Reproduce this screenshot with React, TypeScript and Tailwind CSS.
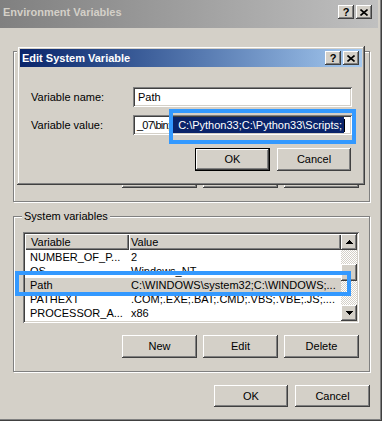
type VarRow = { name: string; value: string; selected?: boolean };

const raised =
  "shadow-[inset_-1px_-1px_#404040,inset_1px_1px_#ffffff,inset_-2px_-2px_#808080,inset_2px_2px_#d4d0c8]";
const sunken =
  "shadow-[inset_1px_1px_#808080,inset_-1px_-1px_#ffffff,inset_2px_2px_#404040,inset_-2px_-2px_#d4d0c8]";
const headerCell =
  "bg-[#d4d0c8] shadow-[inset_1px_1px_#ffffff,inset_-1px_-1px_#404040,inset_-2px_-2px_#808080]";
const checker =
  "bg-[image:repeating-conic-gradient(#d4d0c8_0%_25%,#ffffff_0%_50%)] bg-[length:2px_2px]";

const systemVars: VarRow[] = [
  { name: "NUMBER_OF_P...", value: "2" },
  { name: "OS", value: "Windows_NT" },
  { name: "Path", value: "C:\\WINDOWS\\system32;C:\\WINDOWS;...", selected: true },
  { name: "PATHEXT", value: ".COM;.EXE;.BAT;.CMD;.VBS;.VBE;.JS;...." },
  { name: "PROCESSOR_A...", value: "x86" },
];

function Button({ label, w, h = "h-[23px]", isDefault = false }: { label: string; w: string; h?: string; isDefault?: boolean }) {
  return (
    <button
      type="button"
      className={`flex ${h} ${w} items-center justify-center bg-[#d4d0c8] text-[11px] text-black ${isDefault ? "border border-black" : ""} ${raised}`}
    >
      {label}
    </button>
  );
}

function CaptionButton({ kind }: { kind: "help" | "close" }) {
  return (
    <div className={`flex h-[14px] w-[16px] items-center justify-center bg-[#d4d0c8] ${raised}`}>
      {kind === "help" ? (
        <span className="text-[11px] font-bold leading-none text-black">?</span>
      ) : (
        <svg width="8" height="7" viewBox="0 0 8 7">
          <path d="M0.5 0.5 L7.5 6.5 M7.5 0.5 L0.5 6.5" stroke="black" strokeWidth="1.6" />
        </svg>
      )}
    </div>
  );
}

function Arrow({ dir }: { dir: "up" | "down" }) {
  return (
    <svg width="7" height="4" viewBox="0 0 7 4" shapeRendering="crispEdges">
      <polygon points={dir === "up" ? "0,4 3.5,0 7,4" : "0,0 3.5,4 7,0"} fill="black" />
    </svg>
  );
}

function Scrollbar() {
  return (
    <div className="flex w-[16px] flex-col">
      <div className={`flex h-[16px] items-center justify-center bg-[#d4d0c8] ${raised}`}>
        <Arrow dir="up" />
      </div>
      <div className={`flex-1 ${checker}`}>
        <div className={`mt-[14px] h-[17px] bg-[#d4d0c8] ${raised}`} />
      </div>
      <div className={`flex h-[16px] items-center justify-center bg-[#d4d0c8] ${raised}`}>
        <Arrow dir="down" />
      </div>
    </div>
  );
}

function VarList({ rows, h, scroll }: { rows: VarRow[]; h: string; scroll?: boolean }) {
  return (
    <div className={`flex ${h} bg-white p-[2px] ${sunken}`}>
      <div className="min-w-0 flex-1 overflow-hidden">
        <div className="flex h-[16px] leading-[16px]">
          <div className={`w-[104px] pl-[6px] ${headerCell}`}>Variable</div>
          <div className={`flex-1 pl-[2px] ${headerCell}`}>Value</div>
        </div>
        {rows.map((row) => (
          <div
            key={row.name}
            className={`flex h-[14px] whitespace-nowrap leading-[14px] ${row.selected ? "bg-[#d4d0c8]" : ""}`}
          >
            <div className="w-[104px] pl-[5px]">{row.name}</div>
            <div className="flex-1 overflow-hidden pl-[2px]">{row.value}</div>
          </div>
        ))}
      </div>
      {scroll && <Scrollbar />}
    </div>
  );
}

function GroupBox({ label, children, className }: { label?: string; children: React.ReactNode; className: string }) {
  return (
    <div className={`border border-[#808080] shadow-[inset_1px_1px_#ffffff,1px_1px_#ffffff] pb-[13px] pl-[9px] pr-[10px] ${className}`}>
      <div className="-mt-[7px] ml-[-1px] h-[13px] w-fit bg-[#d4d0c8] px-[2px] leading-[13px]">{label}</div>
      {children}
    </div>
  );
}

function GroupButtons() {
  return (
    <div className="mt-[12px] flex justify-end gap-[6px]">
      <Button label="New" w="w-[75px]" />
      <Button label="Edit" w="w-[75px]" />
      <Button label="Delete" w="w-[75px]" />
    </div>
  );
}

function EditDialog() {
  return (
    <div className="absolute left-[17px] top-[46px] flex h-[139px] w-[348px] flex-col bg-[#d4d0c8] p-[3px] shadow-[inset_-1px_-1px_#404040,inset_1px_1px_#d4d0c8,inset_-2px_-2px_#808080,inset_2px_2px_#ffffff]">
      <div className="flex h-[18px] items-center justify-between bg-linear-to-r from-[#0a246a] to-[#a6caf0] pl-[2px] pr-[3px]">
        <span className="font-bold text-white">Edit System Variable</span>
        <div className="flex gap-[2px]">
          <CaptionButton kind="help" />
          <CaptionButton kind="close" />
        </div>
      </div>
      <div className="flex flex-col pl-[11px] pr-[10px] pt-[20px]">
        <div className="flex items-center">
          <span className="w-[102px]">Variable name:</span>
          <div className={`flex h-[20px] flex-1 items-center bg-white pl-[5px] ${sunken}`}>Path</div>
        </div>
        <div className="mt-[8px] flex items-center">
          <span className="w-[102px]">Variable value:</span>
          <div className={`flex h-[20px] flex-1 items-center overflow-hidden whitespace-nowrap bg-white pl-[4px] ${sunken}`}>
            <span className="tracking-[-0.75px]">_07\bin;</span>
            <span className="ml-[2px] bg-[#0a246a] pl-[6px] pr-[2px] text-white">C:\Python33;C:\Python33\Scripts;</span>
            <span className="h-[13px] w-px bg-black" />
          </div>
        </div>
        <div className="mr-[1px] mt-[13px] flex justify-end gap-[7px]">
          <Button label="OK" w="w-[75px]" isDefault />
          <Button label="Cancel" w="w-[74px]" />
        </div>
      </div>
    </div>
  );
}

export default function App() {
  return (
    <div className="relative h-[421px] w-[382px] overflow-hidden bg-[#d4d0c8] font-['Liberation_Sans',Arial,sans-serif] text-[11px] text-black shadow-[inset_-1px_-1px_#404040,inset_-2px_-2px_#808080]">
      <div className="flex h-[28px] w-[378px] items-start justify-between bg-linear-to-r from-[#808080] to-[#c0c0c0] pl-[3px] pr-[6px] pt-[4px]">
        <span className="font-bold leading-[16px] text-[#d4d0c8]">Environment Variables</span>
        <div className="flex gap-[2px] pt-[1px]">
          <CaptionButton kind="help" />
          <CaptionButton kind="close" />
        </div>
      </div>

      <div className="flex flex-col pl-[13px] pr-[12px]">
        {/* user variables group sits behind the edit dialog */}
        <GroupBox className="mt-[23px]">
          <div className={`mt-[9px] h-[86px] bg-white ${sunken}`} />
          <div className="mt-[1px]">
            <GroupButtons />
          </div>
        </GroupBox>

        <GroupBox label="System variables" className="mt-[14px]">
          <div className="mt-[9px]">
            <VarList rows={systemVars} h="h-[91px]" scroll />
          </div>
          <GroupButtons />
        </GroupBox>

        <div className="mt-[13px] flex justify-end gap-[7px]">
          <Button label="OK" w="w-[74px]" h="h-[22px]" />
          <Button label="Cancel" w="w-[75px]" h="h-[22px]" />
        </div>
      </div>

      <EditDialog />

      <div className="absolute left-[169px] top-[109px] h-[35px] w-[187px] border-4 border-[#3399ff]" />
      <div className="absolute left-[15px] top-[271px] h-[25px] w-[336px] border-4 border-[#3399ff]" />
    </div>
  );
}
